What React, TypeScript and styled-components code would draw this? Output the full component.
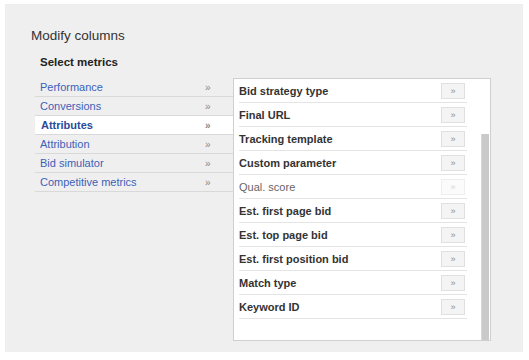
import React from "react";
import styled, { createGlobalStyle } from "styled-components";

const Global = createGlobalStyle`
  html, body { margin: 0; padding: 0; background: #ffffff; }
  body { font-family: "Liberation Sans", Arial, sans-serif; }
`;

const Panel = styled.div`
  margin: 4px 0 0 5px;
  width: 518px;
  height: 348px;
  box-sizing: border-box;
  background: #efefef;
  padding: 23px 0 0 30px;
`;

const Title = styled.h1`
  margin: 0 0 10px -4px;
  font-size: 13.5px;
  line-height: 18px;
  font-weight: normal;
  color: #333333;
`;

const Subtitle = styled.h2`
  margin: 0 0 7px 5px;
  font-size: 11.5px;
  line-height: 15px;
  font-weight: bold;
  color: #222222;
`;

const Columns = styled.div`
  display: flex;
  align-items: flex-start;
`;

const CategoryList = styled.ul`
  list-style: none;
  margin: 1px 0 0;
  padding: 0;
  width: 198px;
`;

const Category = styled.li<{ $active?: boolean }>`
  display: flex;
  align-items: center;
  height: 19px;
  box-sizing: border-box;
  border-bottom: 1px solid #d9d9d9;
  padding-left: ${(p) => (p.$active ? 6 : 5)}px;
  background: ${(p) => (p.$active ? "#ffffff" : "transparent")};
  font-size: 11px;
  font-weight: ${(p) => (p.$active ? "bold" : "normal")};
  color: ${(p) => (p.$active ? "#2b4a9a" : "#3d61b8")};
`;

const CategoryLabel = styled.span`
  flex: 1;
`;

const Chevron = styled.span`
  width: 28px;
  font-size: 10px;
  color: #8a8a8a;
`;

const MetricBox = styled.div`
  margin-top: 1px;
  width: 258px;
  height: 263px;
  box-sizing: border-box;
  background: #ffffff;
  border: 1px solid #cfcfcf;
  display: flex;
`;

const MetricList = styled.ul`
  list-style: none;
  margin: 0;
  padding: 0 0 0 5px;
  width: 228px;
`;

const Metric = styled.li<{ $disabled?: boolean }>`
  display: flex;
  align-items: center;
  justify-content: space-between;
  height: 24px;
  box-sizing: border-box;
  border-bottom: 1px solid #e4e4e4;
  padding-right: 2px;
  font-size: 11px;
  font-weight: ${(p) => (p.$disabled ? "normal" : "bold")};
  color: ${(p) => (p.$disabled ? "#666666" : "#333333")};
`;

const AddButton = styled.span<{ $disabled?: boolean }>`
  display: flex;
  align-items: center;
  justify-content: center;
  width: 24px;
  height: 16px;
  box-sizing: border-box;
  background: ${(p) => (p.$disabled ? "#fbfbfb" : "#f4f4f4")};
  border: 1px solid ${(p) => (p.$disabled ? "#eeeeee" : "#e0e0e0")};
  font-size: 9px;
  font-weight: normal;
  color: ${(p) => (p.$disabled ? "#d4d4d4" : "#8c8c8c")};
`;

const ScrollTrack = styled.div`
  margin-left: 14px;
  padding-top: 55px;
  width: 8px;
  display: flex;
`;

const ScrollThumb = styled.div`
  flex: 1;
  background: #c9c9c9;
  border-left: 1px solid #d8d8d8;
`;

const categories = [
  "Performance",
  "Conversions",
  "Attributes",
  "Attribution",
  "Bid simulator",
  "Competitive metrics",
];

const metrics: { name: string; disabled?: boolean }[] = [
  { name: "Bid strategy type" },
  { name: "Final URL" },
  { name: "Tracking template" },
  { name: "Custom parameter" },
  { name: "Qual. score", disabled: true },
  { name: "Est. first page bid" },
  { name: "Est. top page bid" },
  { name: "Est. first position bid" },
  { name: "Match type" },
  { name: "Keyword ID" },
];

export default function App() {
  return (
    <>
      <Global />
      <Panel>
        <Title>Modify columns</Title>
        <Subtitle>Select metrics</Subtitle>
        <Columns>
          <CategoryList>
            {categories.map((c) => (
              <Category key={c} $active={c === "Attributes"}>
                <CategoryLabel>{c}</CategoryLabel>
                <Chevron>»</Chevron>
              </Category>
            ))}
          </CategoryList>
          <MetricBox>
            <MetricList>
              {metrics.map((m) => (
                <Metric key={m.name} $disabled={m.disabled}>
                  <span>{m.name}</span>
                  <AddButton $disabled={m.disabled}>»</AddButton>
                </Metric>
              ))}
            </MetricList>
            <ScrollTrack>
              <ScrollThumb />
            </ScrollTrack>
          </MetricBox>
        </Columns>
      </Panel>
    </>
  );
}
